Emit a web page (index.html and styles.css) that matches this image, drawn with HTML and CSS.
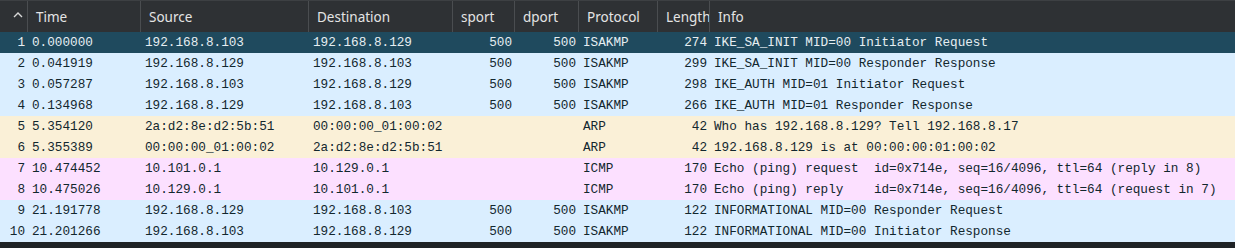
FILE: index.html
```html
<!DOCTYPE html>
<html lang="en">
<head>
    <meta charset="UTF-8">
    <meta name="viewport" content="width=device-width, initial-scale=1.0">
    <title>Packet List</title>
    <link rel="stylesheet" href="styles.css">
</head>
<body>
    <div class="packet-list">
        <div class="row header">
            <div class="cell sort">
                <svg width="10" height="6" viewBox="0 0 10 6"><polyline points="1,5 5,1 9,5" fill="none" stroke="#d8d8d8" stroke-width="1.4"/></svg>
            </div>
            <div class="cell">Time</div>
            <div class="cell">Source</div>
            <div class="cell">Destination</div>
            <div class="cell">sport</div>
            <div class="cell">dport</div>
            <div class="cell">Protocol</div>
            <div class="cell">Length</div>
            <div class="cell">Info</div>
        </div>

        <div class="row packet selected">
            <div class="cell num">1</div><div class="cell">0.000000</div><div class="cell">192.168.8.103</div><div class="cell">192.168.8.129</div>
            <div class="cell num">500</div><div class="cell num">500</div><div class="cell">ISAKMP</div><div class="cell num">274</div>
            <div class="cell">IKE_SA_INIT MID=00 Initiator Request</div>
        </div>
        <div class="row packet udp">
            <div class="cell num">2</div><div class="cell">0.041919</div><div class="cell">192.168.8.129</div><div class="cell">192.168.8.103</div>
            <div class="cell num">500</div><div class="cell num">500</div><div class="cell">ISAKMP</div><div class="cell num">299</div>
            <div class="cell">IKE_SA_INIT MID=00 Responder Response</div>
        </div>
        <div class="row packet udp">
            <div class="cell num">3</div><div class="cell">0.057287</div><div class="cell">192.168.8.103</div><div class="cell">192.168.8.129</div>
            <div class="cell num">500</div><div class="cell num">500</div><div class="cell">ISAKMP</div><div class="cell num">298</div>
            <div class="cell">IKE_AUTH MID=01 Initiator Request</div>
        </div>
        <div class="row packet udp">
            <div class="cell num">4</div><div class="cell">0.134968</div><div class="cell">192.168.8.129</div><div class="cell">192.168.8.103</div>
            <div class="cell num">500</div><div class="cell num">500</div><div class="cell">ISAKMP</div><div class="cell num">266</div>
            <div class="cell">IKE_AUTH MID=01 Responder Response</div>
        </div>
        <div class="row packet arp">
            <div class="cell num">5</div><div class="cell">5.354120</div><div class="cell">2a:d2:8e:d2:5b:51</div><div class="cell">00:00:00_01:00:02</div>
            <div class="cell num"></div><div class="cell num"></div><div class="cell">ARP</div><div class="cell num">42</div>
            <div class="cell">Who has 192.168.8.129? Tell 192.168.8.17</div>
        </div>
        <div class="row packet arp">
            <div class="cell num">6</div><div class="cell">5.355389</div><div class="cell">00:00:00_01:00:02</div><div class="cell">2a:d2:8e:d2:5b:51</div>
            <div class="cell num"></div><div class="cell num"></div><div class="cell">ARP</div><div class="cell num">42</div>
            <div class="cell">192.168.8.129 is at 00:00:00:01:00:02</div>
        </div>
        <div class="row packet icmp">
            <div class="cell num">7</div><div class="cell">10.474452</div><div class="cell">10.101.0.1</div><div class="cell">10.129.0.1</div>
            <div class="cell num"></div><div class="cell num"></div><div class="cell">ICMP</div><div class="cell num">170</div>
            <div class="cell">Echo (ping) request  id=0x714e, seq=16/4096, ttl=64 (reply in 8)</div>
        </div>
        <div class="row packet icmp">
            <div class="cell num">8</div><div class="cell">10.475026</div><div class="cell">10.129.0.1</div><div class="cell">10.101.0.1</div>
            <div class="cell num"></div><div class="cell num"></div><div class="cell">ICMP</div><div class="cell num">170</div>
            <div class="cell">Echo (ping) reply    id=0x714e, seq=16/4096, ttl=64 (request in 7)</div>
        </div>
        <div class="row packet udp">
            <div class="cell num">9</div><div class="cell">21.191778</div><div class="cell">192.168.8.129</div><div class="cell">192.168.8.103</div>
            <div class="cell num">500</div><div class="cell num">500</div><div class="cell">ISAKMP</div><div class="cell num">122</div>
            <div class="cell">INFORMATIONAL MID=00 Responder Request</div>
        </div>
        <div class="row packet udp">
            <div class="cell num">10</div><div class="cell">21.201266</div><div class="cell">192.168.8.103</div><div class="cell">192.168.8.129</div>
            <div class="cell num">500</div><div class="cell num">500</div><div class="cell">ISAKMP</div><div class="cell num">122</div>
            <div class="cell">INFORMATIONAL MID=00 Initiator Response</div>
        </div>
    </div>
</body>
</html>
```

FILE: styles.css
```css
:root {
    --header-bg: #2e3134;
    --header-line: #4a4d50;
    --header-text: #e4e4e4;
    --selected-bg: #1f4a5e;
    --selected-text: #e6eef2;
    --udp-bg: #daeeff;
    --arp-bg: #faf0d7;
    --icmp-bg: #fce0ff;
    --row-text: #12272e;
    --base-bg: #1f2326;
}

body {
    margin: 0;
    background-color: var(--base-bg);
    overflow: hidden;
}

.packet-list {
    width: 1235px;
    height: 248px;
    background-color: var(--base-bg);
}

.row {
    display: grid;
    grid-template-columns: 28px 113px 168px 144px 62px 64px 79px 52px 1fr;
    white-space: pre;
}

.cell {
    overflow: hidden;
    box-sizing: border-box;
}

.header {
    height: 32px;
    background-color: var(--header-bg);
    border-top: 1px solid #3d4043;
    box-sizing: border-box;
    font-family: "Noto Sans", sans-serif;
    font-size: 13.5px;
    color: var(--header-text);
}

.header .cell {
    display: flex;
    align-items: center;
    padding-left: 8px;
    border-right: 1px solid var(--header-line);
}

.header .cell:last-child {
    border-right: none;
}

.header .sort {
    padding-left: 13px;
    padding-bottom: 3px;
}

.packet {
    height: 21px;
    font-family: "Liberation Mono", monospace;
    font-size: 12.7px;
    line-height: 21px;
    color: var(--row-text);
}

.packet .cell {
    padding-left: 4px;
}

.packet .num {
    text-align: right;
    padding-left: 0;
    padding-right: 3px;
}

.packet .cell:first-child {
    padding-right: 3px;
}

.selected {
    background-color: var(--selected-bg);
    color: var(--selected-text);
}

.udp {
    background-color: var(--udp-bg);
}

.arp {
    background-color: var(--arp-bg);
}

.icmp {
    background-color: var(--icmp-bg);
}
```
